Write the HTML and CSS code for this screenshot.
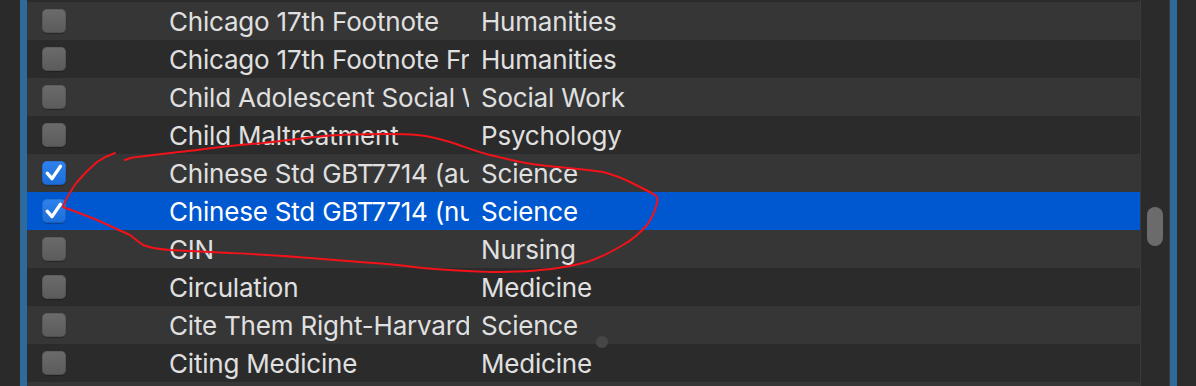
FILE: index.html
```html
<!DOCTYPE html>
<html>
<head>
<meta charset="utf-8">
<link rel="stylesheet" href="styles.css">
</head>
<body>
<div class="window">
  <div class="gutter"></div>
  <div class="focus-bar"></div>
  <div class="table">
    <div class="row"><span class="cb"></span><span class="name">Chicago 17th Footnote</span><span class="cat">Humanities</span></div>
    <div class="row"><span class="cb"></span><span class="name">Chicago 17th Footnote Freestanding</span><span class="cat">Humanities</span></div>
    <div class="row"><span class="cb"></span><span class="name">Child Adolescent Social Work Journal</span><span class="cat">Social Work</span></div>
    <div class="row"><span class="cb"></span><span class="name">Child Maltreatment</span><span class="cat">Psychology</span></div>
    <div class="row"><span class="cb on"><svg viewBox="0 0 24 24"><path d="M5.2 12.2 L10 17.6 L18.4 5.4"/></svg></span><span class="name">Chinese Std GBT7714 (author-year)</span><span class="cat">Science</span></div>
    <div class="row selected"><span class="cb on"><svg viewBox="0 0 24 24"><path d="M5.2 12.2 L10 17.6 L18.4 5.4"/></svg></span><span class="name">Chinese Std GBT7714 (numeric)</span><span class="cat">Science</span></div>
    <div class="row"><span class="cb"></span><span class="name">CIN</span><span class="cat">Nursing</span></div>
    <div class="row"><span class="cb"></span><span class="name">Circulation</span><span class="cat">Medicine</span></div>
    <div class="row"><span class="cb"></span><span class="name">Cite Them Right-Harvard</span><span class="cat">Science</span></div>
    <div class="row"><span class="cb"></span><span class="name">Citing Medicine</span><span class="cat">Medicine</span></div>
    <div class="row"><span class="cb"></span><span class="name">Clinical Orthopaedics</span><span class="cat">Medicine</span></div>
  </div>
  <div class="divider"></div>
  <div class="scroll-area"><div class="thumb"></div></div>
  <div class="divider"></div>
  <div class="focus-bar"></div>
  <div class="right-gutter"></div>
</div>
<div class="cursor-dot"></div>
<svg class="annotation" width="1196" height="386" viewBox="0 0 1196 386">
  <path d="M125 160 C130 158 134 157 137 157 C160 154 180 152 197 150 C220 147 240 145 263 143 C290 140 315 136 340 135 C370 134 395 133 417 135 C430 136 440 139 450 142 C465 147 478 152 490 155 C507 159 522 163 540 165 C562 168 585 169 603 172 C614 175 622 178 630 182 C640 187 650 192 655 195 C658 197 658 200 657 203 C655 211 652 218 647 225 C640 233 632 240 623 245 C611 252 600 258 587 262 C572 266 556 269 540 270 C523 272 507 272 490 272 C468 271 445 270 423 268 C406 266 390 264 373 263 C348 261 322 259 297 257 C275 255 252 254 230 253 C210 252 190 251 170 250 C158 249 150 248 143 245 C137 241 134 238 130 235 C119 230 108 225 97 220 C85 215 74 211 63 207 C64 204 65 201 67 198 C70 193 73 187 77 182 C83 175 90 168 97 162 C103 158 109 155 115 153"/>
</svg>
</body>
</html>
```
FILE: styles.css
```css
html, body {
  margin: 0;
  padding: 0;
  background: #2b2b2b;
  overflow: hidden;
}

body {
  width: 1196px;
  height: 386px;
  position: relative;
  font-family: Inter, "Noto Sans", "Liberation Sans", sans-serif;
}

.window {
  display: flex;
  height: 386px;
  overflow: hidden;
}

.gutter {
  width: 20px;
  flex: none;
  background: #2a2a2a;
}

.right-gutter {
  width: 18px;
  flex: none;
  background: #2c2c2c;
}

.focus-bar {
  width: 7px;
  flex: none;
  background: #2e6b9b;
}

.table {
  width: 1113px;
  flex: none;
  padding-top: 2px;
  background: #2b2b2b;
  overflow: hidden;
}

.row {
  display: grid;
  grid-template-columns: 118px 300px 1fr;
  column-gap: 9px;
  align-items: center;
  height: 38px;
  padding-left: 15px;
  background: #2b2b2b;
  color: #e0e0e0;
  font-size: 26px;
  letter-spacing: -0.2px;
}

.row:nth-child(odd) {
  background: #363636;
}

.row.selected {
  background: #0058d0;
  color: #ffffff;
}

.cb {
  display: block;
  width: 24px;
  height: 24px;
  box-sizing: border-box;
  border-radius: 5px;
  background: linear-gradient(#6b6b6b, #5b5b5b);
  box-shadow: inset 0 0 0 1px rgba(0, 0, 0, 0.12), 0 1px 1px rgba(0, 0, 0, 0.25);
}

.cb.on {
  background: linear-gradient(#2f83ec, #1b6cd7);
}

.cb svg {
  display: block;
  width: 24px;
  height: 24px;
}

.cb svg path {
  fill: none;
  stroke: #ffffff;
  stroke-width: 3.4;
  stroke-linecap: round;
  stroke-linejoin: round;
}

.name,
.cat {
  white-space: nowrap;
  overflow: hidden;
  line-height: 36px;
  padding-top: 2px;
}

.cat {
  margin-left: 3px;
}

.divider {
  width: 1px;
  flex: none;
  background: #3b3b3b;
}

.scroll-area {
  width: 28px;
  flex: none;
  background: #2b2b2b;
  padding: 207px 0 0 6px;
  box-sizing: border-box;
}

.thumb {
  width: 16px;
  height: 39px;
  border-radius: 8px;
  background: #6b6b6b;
}

.cursor-dot {
  position: absolute;
  left: 596px;
  top: 336px;
  width: 12px;
  height: 12px;
  border-radius: 50%;
  background: #474747;
}

.annotation {
  position: absolute;
  left: 0;
  top: 0;
  pointer-events: none;
}

.annotation path {
  fill: none;
  stroke: #f2121a;
  stroke-width: 2;
  stroke-linecap: round;
  stroke-linejoin: round;
}
```
